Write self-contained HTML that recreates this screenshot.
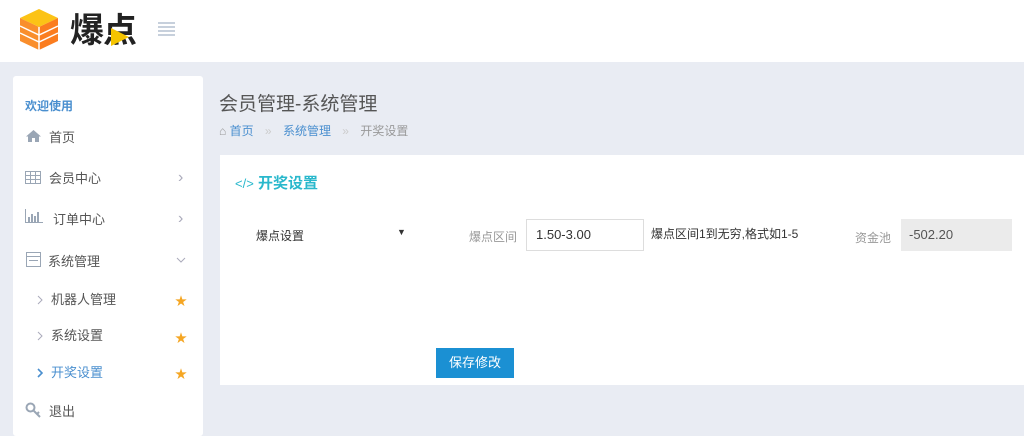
<!DOCTYPE html>
<html><head><meta charset="utf-8"><style>
*{margin:0;padding:0;box-sizing:border-box}
body{width:1024px;height:423px;overflow:hidden;background:#e9ecf3;font-family:"Liberation Sans","Noto Sans CJK SC",sans-serif;position:relative;color:#333}
.hdr{position:absolute;left:0;top:0;width:1024px;height:62px;background:#fff}
.abs{position:absolute;white-space:nowrap}
.side{position:absolute;left:13px;top:76px;width:190px;height:360px;background:#fff;border-radius:3px}
.mi{position:absolute;font-size:13px;color:#555;line-height:16px}
.star{color:#f5a623;font-size:12px}
.chev{color:#aab;font-size:16px;line-height:16px}
.panel{position:absolute;left:220px;top:155px;width:804px;height:230px;background:#fff}
</style></head><body>
<div class="hdr">
<svg class="abs" style="left:18px;top:8px" width="42" height="44" viewBox="0 0 42 44">
<polygon points="21,1 40,10 21,19 2,10" fill="#fcc316"/>
<polygon points="2,10 21,19 21,42 2,33" fill="#f98e2c"/>
<polygon points="40,10 21,19 21,42 40,33" fill="#fb7d1f"/>
<path d="M2,18 L21,27 L40,18 M2,25 L21,34 L40,25" stroke="#fff" stroke-width="1.5" fill="none"/>
<line x1="21" y1="19" x2="21" y2="42" stroke="#fff" stroke-width="1.5"/>
</svg>
<div class="abs" style="left:70px;top:9px;font-size:34px;font-weight:bold;color:#222;letter-spacing:-1px;line-height:44px;-webkit-text-stroke:0">爆点</div>
<svg class="abs" style="left:109px;top:27px" width="22" height="20"><polygon points="2,1 20,10 2,19" fill="#f5c400"/></svg>
<svg class="abs" style="left:158px;top:22px" width="17" height="14"><g fill="#c7d0dc"><rect y="0" width="17" height="2"/><rect y="4" width="17" height="2"/><rect y="8" width="17" height="2"/><rect y="12" width="17" height="2"/></g></svg>
</div>
<div class="side">
<div class="mi" style="left:12px;top:22px;font-size:12px;color:#4a8fcf;font-weight:bold">欢迎使用</div>
<svg class="abs" style="left:13px;top:54px" width="15" height="12"><path d="M7.5 0L0 6.5H2V12H6V8H9V12H13V6.5H15Z" fill="#9aa6b5"/></svg>
<div class="mi" style="left:36px;top:54px">首页</div>
<svg class="abs" style="left:12px;top:95px" width="16" height="13"><rect x=".5" y=".5" width="15" height="12" fill="none" stroke="#9aa6b5"/><path d="M0.5 4.5H15.5M0.5 8.5H15.5M5.5 0V13M10.5 0V13" stroke="#9aa6b5"/></svg>
<div class="mi" style="left:36px;top:95px">会员中心</div><div class="mi chev" style="left:165px;top:94px">›</div>
<svg class="abs" style="left:12px;top:133px" width="18" height="14"><path d="M.5 0V13.5H18" stroke="#9aa6b5" fill="none"/><g fill="#9aa6b5"><rect x="3" y="8" width="2" height="5"/><rect x="6" y="5" width="2" height="8"/><rect x="9" y="7" width="2" height="6"/><rect x="12" y="3" width="2" height="10"/></g></svg>
<div class="mi" style="left:40px;top:136px">订单中心</div><div class="mi chev" style="left:165px;top:135px">›</div>
<svg class="abs" style="left:13px;top:176px" width="15" height="15"><rect x=".5" y=".5" width="14" height="14" fill="none" stroke="#9aa6b5"/><path d="M0 4.5H15M3 8.5H12" stroke="#9aa6b5"/></svg>
<div class="mi" style="left:35px;top:178px">系统管理</div>
<svg class="abs" style="left:163px;top:181px" width="10" height="6"><path d="M1 1L5 5L9 1" stroke="#aab" fill="none"/></svg>
<svg class="abs" style="left:24px;top:219px" width="6" height="10"><path d="M1 1L5 5L1 9" stroke="#aab" fill="none"/></svg><div class="mi" style="left:38px;top:216px">机器人管理</div><div class="abs star" style="left:162px;top:216px">★</div>
<svg class="abs" style="left:24px;top:255px" width="6" height="10"><path d="M1 1L5 5L1 9" stroke="#aab" fill="none"/></svg><div class="mi" style="left:38px;top:252px">系统设置</div><div class="abs star" style="left:162px;top:253px">★</div>
<svg class="abs" style="left:24px;top:292px" width="6" height="10"><path d="M1 1L5 5L1 9" stroke="#4a8fcf" stroke-width="1.6" fill="none"/></svg><div class="mi" style="left:38px;top:289px;color:#4a8fcf">开奖设置</div><div class="abs star" style="left:162px;top:289px">★</div>
<svg class="abs" style="left:12px;top:326px" width="18" height="16"><circle cx="5.5" cy="5.5" r="4" fill="none" stroke="#9aa6b5" stroke-width="2"/><path d="M8.5 8.5L15 15M12 12L14 10" stroke="#9aa6b5" stroke-width="2"/></svg>
<div class="mi" style="left:36px;top:328px">退出</div>
</div>
<div class="abs" style="left:219px;top:89px;font-size:19px;color:#555">会员管理-系统管理</div>
<div class="abs" style="left:219px;top:122px;font-size:12px;color:#4a8fcf"><span style="color:#999">&#8962;</span> 首页 <span style="color:#ccc;margin:0 8px">»</span> 系统管理 <span style="color:#ccc;margin:0 8px">»</span> <span style="color:#999">开奖设置</span></div>
<div class="panel">
<div class="abs" style="left:15px;top:17px;font-size:15px;font-weight:bold;color:#29b8cc"><span style="font-weight:normal;font-size:13px">&lt;/&gt;</span> 开奖设置</div>
<div class="abs" style="left:36px;top:72px;font-size:12px;color:#333">爆点设置</div>
<div class="abs" style="left:177px;top:72px;font-size:9px;color:#333">▼</div>
<div class="abs" style="left:249px;top:73px;font-size:12px;color:#999">爆点区间</div>
<div class="abs" style="left:306px;top:64px;width:118px;height:32px;border:1px solid #ddd;font-size:13px;padding:7px 9px;color:#333">1.50-3.00</div>
<div class="abs" style="left:431px;top:70px;font-size:12px;color:#333">爆点区间1到无穷,格式如1-5</div>
<div class="abs" style="left:635px;top:74px;font-size:12px;color:#999">资金池</div>
<div class="abs" style="left:681px;top:64px;width:111px;height:32px;background:#ebebeb;font-size:13px;padding:8px 8px;color:#555">-502.20</div>
<div class="abs" style="left:216px;top:193px;width:78px;height:30px;background:#1b90d3;color:#fff;font-size:13px;text-align:center;line-height:30px">保存修改</div>
</div>
</body></html>
